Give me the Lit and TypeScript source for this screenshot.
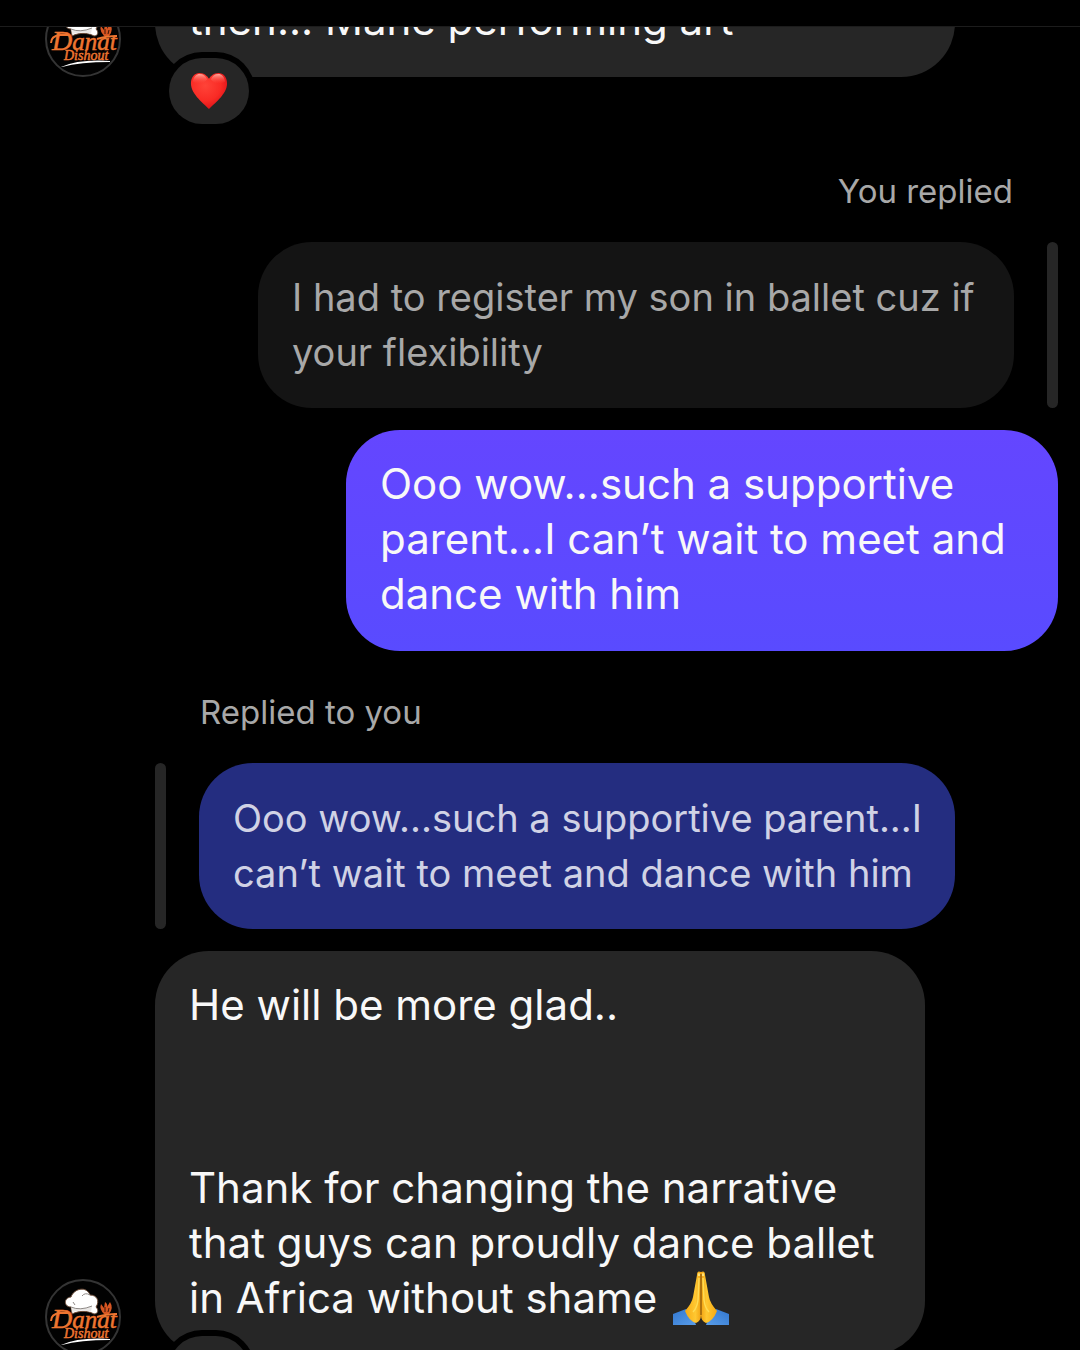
import { LitElement, html, svg, css, nothing } from "lit";
import { customElement, property } from "lit/decorators.js";

@customElement("chat-avatar")
class ChatAvatar extends LitElement {
  static styles = css`
    :host { display: block; width: 76px; height: 76px; }
    .logo { display: block; width: 100%; height: 100%; }
    .name { font-family: "Liberation Serif", serif; font-style: italic; fill: #ee7530; stroke: #ee7530; stroke-width: 0.5; }
    .cap { font-size: 28px; }
    .big { font-size: 25px; }
    .small { font-size: 14px; }
  `;
  render() {
    return html`<svg class="logo" viewBox="0 0 76 76" role="img" aria-label="Danat Dishout">
      <circle cx="38" cy="38" r="37" fill="#020202" stroke="#343434" stroke-width="2" />
      <path d="M27 35 26 28c-7 0-8-9 0-10 3-9 16-11 19-2 7 0 10 6 6 12 3 3 2 7-2 7-7-4-16-3-22 0Z" fill="#fff" stroke="#6b4a36" stroke-width="1" />
      <path d="M26 28q9 4 21-1l-1 6q-9-3-19 0Z" fill="#e9e7e5" />
      <path d="M26 28q9 4 21-1M37 17q3-4 8-1M28 23l2 3" fill="none" stroke="#8f8a87" stroke-width="1" />
      <path d="M59 35q-5-5-3-10l3 4 1-6q3 2 2 5l3-5q4 6-1 12Z" fill="#d65522" />
      <path d="M60 33v-5m3 5 1-4" stroke="#3b1407" stroke-width="1" />
      <path d="M6 42q0-7 9-8h9" fill="none" stroke="#ee7530" stroke-width="2" />
      <path d="M52 38q9-3 20-3" fill="none" stroke="#ee7530" stroke-width="2" />
      <text class="name big" x="7" y="49"><tspan class="cap">D</tspan>anat</text>
      <text class="name small" x="19" y="59">Dishout</text>
      <path d="M16 66q18-8 49-6v1q-30 0-48 5Z" fill="#fff" />
    </svg>`;
  }
}

const heart = svg`
  <defs>
    <radialGradient id="red" cx="0.4" cy="0.35" r="0.7">
      <stop offset="0" stop-color="#ff4338" />
      <stop offset="0.6" stop-color="#f92b25" />
      <stop offset="1" stop-color="#d90f17" />
    </radialGradient>
    <linearGradient id="shine" x1="0" y1="0" x2="0" y2="1">
      <stop offset="0" stop-color="#ffaca0" />
      <stop offset="1" stop-color="#ff4338" stop-opacity="0" />
    </linearGradient>
  </defs>
  <path d="M20 39C16 34 1 24 1 12 1 5 5 1 10 1c5 0 8 3 10 6 2-3 5-6 10-6 5 0 9 4 9 11 0 12-15 22-19 27Z" fill="url(#red)" />
  <path d="M3 10C4 4 7 2 10 2c4 0 7 2 8 6-4 5-10 6-15 2ZM22 8c1-4 4-6 8-6 3 0 6 2 7 8-5 4-11 3-15-2Z" fill="url(#shine)" />`;

const hand = svg`
  <path d="M0 43 13 38q7 6 10 16H0Z" fill="url(#sleeve)" />
  <path d="M28 1q-4-2-4 3l-4 22q-1 6-8 14 4 10 11 12 5-2 5-8Z" fill="url(#skin)" />
  <path d="M26 7 25 29q-1 8-5 12" fill="none" stroke="#ffdc54" stroke-width="1.5" />
  <path d="M25 3q1-2 2 0v2h-2Z" fill="#ffe27a" />`;

@customElement("folded-hands")
class FoldedHands extends LitElement {
  static styles = css`
    :host { display: inline-block; width: 56px; height: 54px; margin-left: 4px; vertical-align: -12px; line-height: 0; }
    .hands { display: block; width: 100%; height: 100%; }
  `;
  render() {
    return html`<svg class="hands" viewBox="0 0 56 54" role="img" aria-label="Folded hands">
      <defs>
        <linearGradient id="skin" x1="0" y1="0" x2="1" y2="0">
          <stop offset="0" stop-color="#f6a912" />
          <stop offset="0.65" stop-color="#ffc832" />
          <stop offset="1" stop-color="#f2a313" />
        </linearGradient>
        <linearGradient id="sleeve" x1="0" y1="0" x2="1" y2="1">
          <stop offset="0" stop-color="#3277cf" />
          <stop offset="1" stop-color="#599de9" />
        </linearGradient>
      </defs>
      <g>${hand}</g>
      <g transform="matrix(-1 0 0 1 56 0)">${hand}</g>
      <path d="M28 3v41" stroke="#98600c" stroke-width="1.5" />
    </svg>`;
  }
}

@customElement("chat-message")
class ChatMessage extends LitElement {
  @property({ type: Boolean, reflect: true }) own = false;
  @property({ type: Boolean }) reacted = false;
  @property() caption = "";
  @property() quote = "";

  static styles = css`
    :host { display: flex; flex-direction: column; align-items: flex-start; padding-left: 155px; padding-right: 22px; }
    :host([own]) { align-items: flex-end; }
    .caption { margin: 0 45px 31px; font-size: 33px; line-height: 40px; color: #a8a8a8; }
    .quoted { display: flex; gap: 33px; margin-bottom: 22px; }
    :host([own]) .quoted { flex-direction: row-reverse; }
    .rule { flex: none; width: 11px; border-radius: 6px; background: #262626; }
    .quote { box-sizing: border-box; max-width: 756px; margin: 0; padding: 28px 26px 28px 34px; border-radius: 54px; background: #242d80; color: #d0d2e5; font-size: 38px; line-height: 55px; }
    :host([own]) .quote { background: #141414; color: #a8a8a8; }
    .line { position: relative; max-width: 800px; }
    .bubble { box-sizing: border-box; max-width: 800px; padding: 26px 34px 30px; border-radius: 54px; background: #262626; color: #f8f8f8; font-size: 42px; line-height: 55px; }
    :host([own]) .bubble { max-width: 712px; background: linear-gradient(#6446ff, #594bff); }
    .face { position: absolute; left: -110px; bottom: 0; }
    .reaction { position: absolute; left: 14px; bottom: -47px; display: grid; place-items: center; width: 80px; height: 66px; padding: 0; border: 0; border-radius: 33px; background: #262626; box-shadow: 0 0 0 6px #000; }
    .heart { width: 38px; height: 38px; }
  `;
  render() {
    return html`
      ${this.caption ? html`<p class="caption">${this.caption}</p>` : nothing}
      ${this.quote
        ? html`<div class="quoted"><span class="rule"></span><blockquote class="quote">${this.quote}</blockquote></div>`
        : nothing}
      <div class="line">
        ${this.own ? nothing : html`<chat-avatar class="face"></chat-avatar>`}
        <div class="bubble"><slot></slot></div>
        ${this.reacted
          ? html`<button class="reaction" aria-label="Heart reaction"><svg class="heart" viewBox="0 0 40 40">${heart}</svg></button>`
          : nothing}
      </div>`;
  }
}

@customElement("app-root")
class AppRoot extends LitElement {
  static styles = css`
    :host { display: flex; flex-direction: column; height: 100vh; overflow: hidden; background: #000; font-family: Inter, "Liberation Sans", sans-serif; }
    .top { flex: none; height: 26px; border-bottom: 1px solid #1c1c1c; }
    .thread { flex: 1; min-height: 0; overflow: hidden; }
    .log { display: flex; flex-direction: column; margin-top: -61px; }
    .wide { width: 732px; max-width: 100%; }
    .medium { max-width: 702px; }
    .text { margin: 0; }
    .text + .text { margin-top: 128px; }
    .first { margin-bottom: 94px; }
    .second { margin-bottom: 41px; }
  `;
  render() {
    return html`
      <header class="top"></header>
      <main class="thread">
        <div class="log">
          <chat-message class="first" reacted><p class="text wide">then... Mane performing art</p></chat-message>
          <chat-message class="second" own caption="You replied" quote="I had to register my son in ballet cuz if your flexibility">Ooo wow...such a supportive parent...I can’t wait to meet and dance with him</chat-message>
          <chat-message reacted caption="Replied to you" quote="Ooo wow...such a supportive parent...I can’t wait to meet and dance with him">
            <p class="text medium">He will be more glad..</p>
            <p class="text medium">Thank for changing the narrative that guys can proudly dance ballet in Africa without shame <folded-hands></folded-hands></p>
          </chat-message>
        </div>
      </main>`;
  }
}
